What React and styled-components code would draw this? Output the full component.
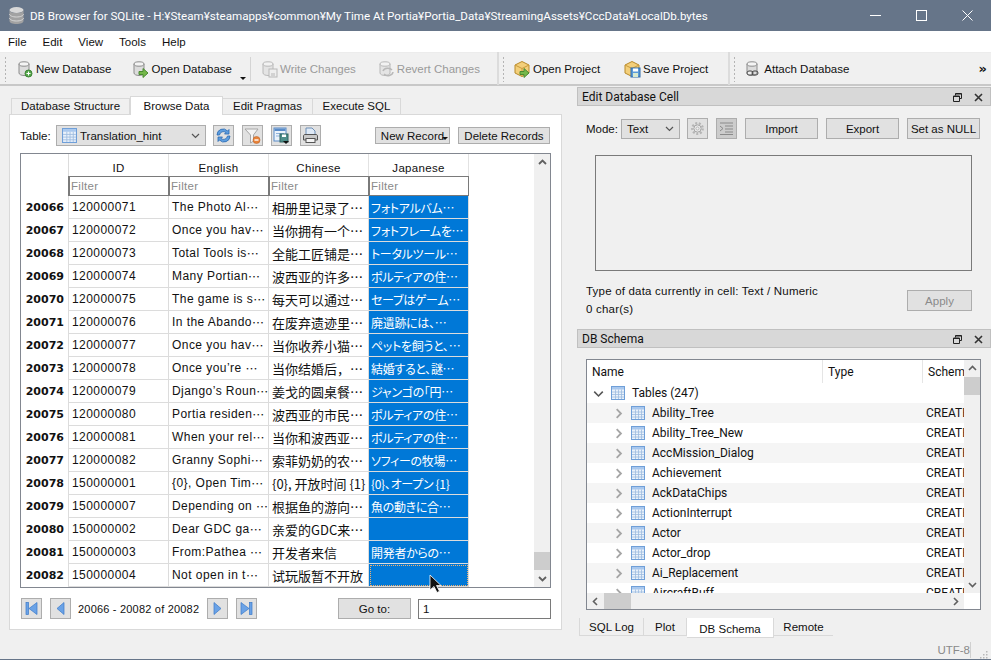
import React from 'react';
import styled, { createGlobalStyle } from 'styled-components';

const UI_FONT = '"Liberation Sans", Arial, "Noto Sans CJK JP", sans-serif';
const SEGOE_LIKE = 'Roboto, "Noto Sans", sans-serif';

const GlobalStyle = createGlobalStyle`
  html, body {
    margin: 0;
    padding: 0;
    background: #f0f0f0;
    overflow: hidden;
  }
  * { box-sizing: border-box; }
  #root { width: 991px; height: 660px; }
`;

const Window = styled.div`
  position: relative;
  width: 991px;
  height: 660px;
  display: flex;
  flex-direction: column;
  background: #f0f0f0;
  font-family: ${UI_FONT};
  font-size: 11.5px;
  color: #111;
  border-bottom: 1px solid #667589;
  overflow: hidden;
`;

// Title bar
const TitleBar = styled.div`
  height: 31px;
  flex: none;
  display: flex;
  align-items: center;
  background: #667589;
  color: #fff;
  padding: 0 1px 0 8px;
  font-family: ${SEGOE_LIKE};
  font-size: 11.6px;
`;

const TitleText = styled.span`
  margin-left: 5px;
  white-space: nowrap;
  flex: 1;
`;

const WinButton = styled.div`
  width: 46px;
  height: 31px;
  display: flex;
  align-items: center;
  justify-content: center;
`;

// Menu
const MenuBar = styled.div`
  height: 21px;
  flex: none;
  background: #fff;
  display: flex;
  align-items: center;
  padding-left: 8px;
  gap: 16px;
`;

// Toolbar
const ToolBar = styled.div`
  height: 34px;
  flex: none;
  display: flex;
  align-items: center;
  border-top: 1px solid #ececec;
  border-bottom: 2px solid #c8c8c8;
  background: #f0f0f0;
  position: relative;
`;

const Grip = styled.div`
  width: 3px;
  height: 26px;
  flex: none;
  margin-left: ${p => p.$left || 4}px;
  background-image: radial-gradient(#b4b4b4 1px, transparent 1px);
  background-size: 3px 4px;
`;

const ToolButton = styled.div`
  display: flex;
  align-items: center;
  gap: 2px;
  white-space: nowrap;
  margin-left: ${p => p.$left}px;
  color: ${p => (p.$off ? '#9a9a9a' : '#111')};
  position: relative;
`;

const ToolSep = styled.div`
  width: 1px;
  height: 24px;
  flex: none;
  background: #d4d4d4;
  margin-left: ${p => p.$left}px;
`;

const ToolDivider = styled.div`
  width: 2px;
  height: 33px;
  flex: none;
  background: #dcdcdc;
  margin-left: ${p => p.$left}px;
`;

const DropMark = styled.span`
  position: absolute;
  right: -14px;
  bottom: -2px;
  width: 0;
  height: 0;
  border-left: 3px solid transparent;
  border-right: 3px solid transparent;
  border-top: 3px solid #111;
`;

const More = styled.div`
  margin-left: auto;
  margin-right: 4px;
  font-size: 13px;
  font-weight: 700;
  font-family: "DejaVu Sans", sans-serif;
`;

// Body
const Body = styled.div`
  flex: 1;
  display: flex;
  min-height: 0;
`;

const LeftColumn = styled.div`
  width: 577px;
  flex: none;
  padding: 10px 15px 0 9px;
`;

const TabRow = styled.div`
  display: flex;
  align-items: flex-end;
  height: 19px;
  padding-left: 2px;
  position: relative;
  z-index: 1;
`;

const MainTab = styled.div`
  height: ${p => (p.$active ? 19 : 17)}px;
  display: flex;
  align-items: center;
  justify-content: center;
  width: ${p => p.$w}px;
  padding-bottom: 1px;
  background: ${p => (p.$active ? '#fff' : '#f0f0f0')};
  border: 1px solid #d9d9d9;
  border-left: ${p => (p.$active || p.$first ? '1px solid #d9d9d9' : 'none')};
  border-bottom: ${p => (p.$active ? 'none' : '1px solid #d9d9d9')};
`;

const TabPane = styled.div`
  height: 516px;
  margin-top: -1px;
  background: #fff;
  border: 1px solid #d9d9d9;
  padding: 0 10px;
`;

const TableBar = styled.div`
  height: 38px;
  display: flex;
  align-items: center;
  padding-top: 3px;
`;

const TableLabel = styled.span`
  width: 30px;
  flex: none;
`;

const Combo = styled.div`
  display: flex;
  align-items: center;
  width: ${p => p.$w}px;
  height: ${p => p.$h || 21}px;
  background: #e1e1e1;
  border: 1px solid #adadad;
  padding: 0 5px;
  margin-left: ${p => p.$left || 0}px;
  flex: none;
  gap: 3px;
`;

const ComboLabel = styled.span`
  flex: 1;
`;

const IconButton = styled.div`
  width: 21px;
  height: 21px;
  flex: none;
  display: flex;
  align-items: center;
  justify-content: center;
  background: ${p => (p.$pressed ? '#cccccc' : '#e1e1e1')};
  border: 1px solid #adadad;
  margin-left: ${p => p.$left}px;
`;

const PushButton = styled.div`
  display: flex;
  align-items: center;
  justify-content: center;
  flex: none;
  position: relative;
  width: ${p => p.$w}px;
  height: ${p => p.$h || 21}px;
  margin-left: ${p => p.$left || 0}px;
  background: #e1e1e1;
  border: 1px solid #adadad;
  white-space: nowrap;
  color: ${p => (p.$off ? '#8a8a8a' : '#111')};
`;

const MiniArrow = styled.span`
  position: absolute;
  right: 1px;
  bottom: 3px;
  border-left: 3px solid transparent;
  border-right: 3px solid transparent;
  border-top: 3px solid #111;
`;

// Table
const TableFrame = styled.div`
  height: 435px;
  border: 1px solid #828790;
  display: flex;
  position: relative;
`;

const Grid = styled.div`
  width: 513px;
  flex: none;
  display: grid;
  grid-template-columns: 48px 100px 100px 100px 100px;
  grid-template-rows: 22px 20px repeat(17, 23px);
  align-content: start;
`;

const Corner = styled.div`
  grid-row: span 2;
  border-right: 1px solid #dcdcdc;
`;

const HeaderCell = styled.div`
  display: flex;
  align-items: center;
  justify-content: center;
  border-right: 1px solid #e2e2e2;
  padding-top: 5px;
  letter-spacing: 0.3px;
`;

const FilterBox = styled.div`
  border: 1px solid #7a7a7a;
  border-left-width: 2px;
  margin-left: -1px;
  background: #fff;
  color: #8a8a8a;
  display: flex;
  align-items: center;
  padding-left: 1px;
  letter-spacing: 0.3px;
`;

const RowHead = styled.div`
  display: flex;
  align-items: center;
  justify-content: flex-end;
  padding-right: 4px;
  font-family: "DejaVu Sans", sans-serif;
  font-weight: 700;
  font-size: 11px;
  border-right: 1px solid #dcdcdc;
`;

const Cell = styled.div`
  display: flex;
  align-items: center;
  padding-left: 3px;
  white-space: pre;
  overflow: hidden;
  border-right: 1px solid #dcdcdc;
  border-bottom: 1px solid #dcdcdc;
  font-family: ${p => (p.$zh ? '"Noto Sans CJK SC", sans-serif' : UI_FONT)};
  font-size: ${p => (p.$zh ? 13 : 12)}px;
  letter-spacing: ${p => (p.$zh ? 0 : '0.45px')};
`;

const SelectedCell = styled.div`
  display: flex;
  align-items: center;
  padding-left: 2px;
  white-space: nowrap;
  overflow: hidden;
  background: #0078d7;
  color: #fff;
  font-family: "Noto Sans CJK JP", sans-serif;
  font-size: 12px;
  letter-spacing: -0.3px;
  font-feature-settings: "palt";
  border-right: 1px solid #dcdcdc;
  border-bottom: 1px solid #dcdcdc;
  outline: ${p => (p.$focus ? '1px dotted #f0b070' : 'none')};
  outline-offset: -2px;
`;

const Dots = styled.span`
  font-family: "Noto Sans CJK JP", sans-serif;
  letter-spacing: 0;
`;

const Spacer = styled.div`
  flex: 1;
`;

const VScroll = styled.div`
  width: 16px;
  flex: none;
  background: #f0f0f0;
  display: flex;
  flex-direction: column;
  align-items: center;
`;

const ScrollEnd = styled.div`
  height: ${p => p.$h || 17}px;
  width: ${p => (p.$w ? `${p.$w}px` : '100%')};
  flex: none;
  display: flex;
  align-items: center;
  justify-content: center;
`;

const ScrollTrack = styled.div`
  flex: 1;
  width: 100%;
  display: flex;
  flex-direction: column;
  justify-content: ${p => (p.$start ? 'flex-start' : 'flex-end')};
`;

const Thumb = styled.div`
  height: ${p => p.$h}px;
  background: #cdcdcd;
  flex: none;
`;

// Pagination
const Pager = styled.div`
  height: 41px;
  display: flex;
  align-items: center;
`;

const PagerText = styled.span`
  margin-left: 7px;
  width: 122px;
  flex: none;
  font-size: 11px;
  letter-spacing: 0.2px;
  white-space: nowrap;
`;

const GotoInput = styled.div`
  width: 133px;
  height: 20px;
  flex: none;
  margin-left: 7px;
  border: 1px solid #7a7a7a;
  background: #fff;
  display: flex;
  align-items: center;
  padding-left: 4px;
`;

// Right docks
const RightColumn = styled.div`
  flex: 1;
  display: flex;
  flex-direction: column;
  min-width: 0;
  padding-top: 1px;
`;

const DockTitle = styled.div`
  height: 19px;
  flex: none;
  display: flex;
  align-items: center;
  background: #d8d8d8;
  border: 1px solid #c0c0c0;
  padding: 1px 7px 0 4px;
  gap: 12px;
  font-family: ${SEGOE_LIKE};
  font-size: 12px;
`;

const DockName = styled.span`
  flex: 1;
`;

const ModeRow = styled.div`
  display: flex;
  align-items: center;
  height: 21px;
  margin-top: 12px;
  padding-left: 9px;
`;

const ModeLabel = styled.span`
  width: 28px;
  flex: none;
`;

const EditArea = styled.div`
  width: 377px;
  height: 116px;
  flex: none;
  margin: 16px 0 0 18px;
  background: #f0f0f0;
  border: 1px solid #7a7a7a;
`;

const InfoRow = styled.div`
  display: flex;
  padding: 19px 19px 0 9px;
  height: 58px;
  flex: none;
`;

const InfoText = styled.div`
  flex: 1;
  display: flex;
  flex-direction: column;
  gap: 4px;
  margin-top: -6px;
  line-height: 14px;
  letter-spacing: 0.2px;
`;

const SchemaBox = styled.div`
  width: 395px;
  height: 251px;
  flex: none;
  margin: 11px 0 0 9px;
  border: 1px solid #828790;
  background: #fff;
  display: flex;
  flex-direction: column;
`;

const SchemaMain = styled.div`
  flex: 1;
  display: flex;
  min-height: 0;
`;

const TreeArea = styled.div`
  flex: 1;
  min-width: 0;
  overflow: hidden;
`;

const TreeHead = styled.div`
  display: grid;
  grid-template-columns: 236px 100px 1fr;
  height: 23px;
`;

const TreeHeadCell = styled.div`
  display: flex;
  align-items: center;
  padding: 1px 0 0 5px;
  white-space: nowrap;
  overflow: hidden;
  border-right: ${p => (p.$last ? 'none' : '1px solid #e5e5e5')};
  font-family: ${SEGOE_LIKE};
  font-size: 12px;
`;

const TreeRow = styled.div`
  height: 20px;
  display: flex;
  align-items: center;
  background: ${p => (p.$alt ? '#f5f5f5' : '#fff')};
  padding-left: ${p => p.$indent}px;
  position: relative;
  font-family: ${SEGOE_LIKE};
  font-size: 12px;
`;

const TreeGap = styled.span`
  width: 7px;
  flex: none;
`;

const TreeName = styled.span`
  margin-left: 7px;
`;

const TreeSql = styled.span`
  position: absolute;
  left: 339px;
`;

const HScroll = styled.div`
  height: 16px;
  flex: none;
  display: flex;
  background: #f0f0f0;
  margin-right: 16px;
`;

const HThumb = styled.div`
  width: 27px;
  flex: none;
  background: #cdcdcd;
`;

const DockTabs = styled.div`
  display: flex;
  align-items: flex-start;
  margin: 8px 0 0 2px;
  height: 20px;
  flex: none;
`;

const DockTab = styled.div`
  width: ${p => p.$w}px;
  height: ${p => (p.$active ? 20 : 18)}px;
  display: flex;
  align-items: center;
  justify-content: center;
  background: ${p => (p.$active ? '#fff' : '#f0f0f0')};
  border: 1px solid #d9d9d9;
  border-top: none;
  border-left: ${p => (p.$first ? '1px solid #d9d9d9' : 'none')};
  border-right: ${p => (p.$plain ? 'none' : '1px solid #d9d9d9')};
  padding-top: ${p => (p.$active ? 2 : 0)}px;
`;

const StatusBar = styled.div`
  display: flex;
  align-items: center;
  justify-content: flex-end;
  height: 22px;
  color: #8a8a8a;
  padding-right: 3px;
  flex: none;
  margin-top: 1px;
`;

const StatusText = styled.span`
  border-right: 1px solid #d0d0d0;
  line-height: 16px;
`;

const SizeGrip = styled.svg`
  margin: 8px 0 0 8px;
`;

const Cursor = styled.svg`
  position: absolute;
  left: 429px;
  top: 574px;
`;

// Icons
const DbShape = () => (
  <>
    <path d="M3 4v9c0 1.5 2.5 2.5 5 2.5s5-1 5-2.5V4z" fill="#dcdcdc" stroke="#8c8c8c" />
    <ellipse cx="8" cy="4" rx="5" ry="2.2" fill="#f4f4f4" stroke="#8c8c8c" />
  </>
);

const NewDbIcon = () => (
  <svg width="18" height="18" viewBox="0 0 18 18">
    <DbShape />
    <circle cx="12.5" cy="13.5" r="3.5" fill="#55a84a" stroke="#3c8236" />
    <path d="M10.5 13.5h4M12.5 11.5v4" stroke="#fff" />
  </svg>
);

const OpenDbIcon = () => (
  <svg width="18" height="18" viewBox="0 0 18 18">
    <DbShape />
    <path d="M8 11.5h4V8.500l5 4.500-5 4.500v-3H8z" fill="#75b84a" stroke="#4b8a32" />
  </svg>
);

const WriteIcon = () => (
  <svg width="18" height="18" viewBox="0 0 18 18" opacity="0.55">
    <DbShape />
    <rect x="9" y="9" width="8" height="8" fill="#eee" stroke="#8c8c8c" />
    <rect x="11" y="13" width="4" height="4" fill="#bbb" />
  </svg>
);

const RevertIcon = () => (
  <svg width="18" height="18" viewBox="0 0 18 18" opacity="0.55">
    <DbShape />
    <path d="M6 11a5 4 0 0 1 9-1M16 12a5 4 0 0 1-9 2" fill="none" stroke="#8c8c8c" strokeWidth="1.5" />
  </svg>
);

const BoxShape = () => (
  <path d="M2 5l7-3.500L16 5v8l-7 3.500L2 13z" fill="#f3cf7a" stroke="#b88a2a" />
);

const OpenProjectIcon = () => (
  <svg width="18" height="18" viewBox="0 0 18 18">
    <BoxShape />
    <path d="M2 5l7 3.500L16 5M9 8.500v8" fill="none" stroke="#c99a3a" />
    <path d="M7 11.500h4V8.500l5 4.500-5 4.500v-3H7z" fill="#75b84a" stroke="#4b8a32" />
  </svg>
);

const SaveProjectIcon = () => (
  <svg width="18" height="18" viewBox="0 0 18 18">
    <BoxShape />
    <path d="M2 5l7 3.500L16 5" fill="none" stroke="#c99a3a" />
    <rect x="8" y="8" width="9" height="9" fill="#5a9ad8" stroke="#2f6ba8" />
    <rect x="10" y="8.500" width="5" height="3" fill="#fff" />
    <rect x="10" y="13" width="5" height="4" fill="#d8ead0" />
  </svg>
);

const AttachIcon = () => (
  <svg width="18" height="18" viewBox="0 0 18 18">
    <DbShape />
    <rect x="3" y="11" width="6" height="4" rx="2" fill="#eee" stroke="#444" />
    <rect x="8" y="11" width="6" height="4" rx="2" fill="none" stroke="#444" />
  </svg>
);

const TableIcon = ({ size = 14 }) => (
  <svg width={size} height={size} viewBox="0 0 14 14">
    <rect x="0.500" y="0.500" width="13" height="13" fill="#eaf2fb" stroke="#6f9fd8" />
    <rect x="1" y="1" width="12" height="2.500" fill="#a9c8ee" />
    <path d="M1 6h12M1 8.500h12M1 11h12M4.500 3.500V13M7.500 3.500V13M10.500 3.500V13" stroke="#9dbbe0" strokeWidth="0.8" />
  </svg>
);

const RefreshIcon = () => (
  <svg width="17" height="17" viewBox="0 0 17 17">
    <path d="M2 8a6 6 0 0 1 10.500-4L14 2.500V7H9.500l1.500-1.500A4 4 0 0 0 4.500 8z" fill="#5d9ee0" stroke="#2a68b0" strokeWidth="0.8" />
    <path d="M15 9a6 6 0 0 1-10.500 4L3 14.500V10h4.500L6 11.500A4 4 0 0 0 12.500 9z" fill="#5d9ee0" stroke="#2a68b0" strokeWidth="0.8" />
  </svg>
);

const FilterIcon = () => (
  <svg width="17" height="17" viewBox="0 0 17 17">
    <path d="M1 2h13L9.500 8v6l-3 2V8z" fill="#f4f4f4" stroke="#a6a6a6" />
    <circle cx="12.500" cy="13" r="3.500" fill="#e8833a" stroke="#c0652a" strokeWidth="0.6" />
    <path d="M10.500 13h4" stroke="#fff" strokeWidth="1.400" />
  </svg>
);

const ExportIcon = () => (
  <svg width="17" height="17" viewBox="0 0 17 17">
    <rect x="1" y="1" width="12" height="13" fill="#eaf2fb" stroke="#5a8cc8" />
    <rect x="1.500" y="1.500" width="11" height="2.500" fill="#5a8cc8" />
    <path d="M3 6.500h8M3 9h4" stroke="#8fb2dc" />
    <rect x="7" y="7" width="8" height="8" fill="#4f8e8a" stroke="#2f6460" />
    <rect x="9" y="7.500" width="4" height="2.500" fill="#fff" />
    <path d="M10 14h6l-3 3z" fill="#111" />
  </svg>
);

const PrintIcon = () => (
  <svg width="17" height="17" viewBox="0 0 17 17">
    <path d="M4 1h6l3 3v5H4z" fill="#dfeaf7" stroke="#6f8fb5" />
    <path d="M1.500 9c0-1 .7-1.500 1.500-1.500h11c.8 0 1.500.5 1.500 1.500v4h-14z" fill="#c9c9c9" stroke="#555" />
    <rect x="4" y="11.500" width="9" height="4" fill="#f4f4f4" stroke="#555" />
  </svg>
);

const Chevron = ({ dir = 'down', color = '#555', size = 9, weight = 1.2 }) => {
  const paths = {
    down: 'M1 3l3.500 3.500L8 3',
    up: 'M1 6l3.500-3.500L8 6',
    left: 'M6 1L2.500 4.500 6 8',
    right: 'M3 1l3.500 3.500L3 8',
  };
  return (
    <svg width={size} height={size} viewBox="0 0 9 9">
      <path d={paths[dir]} fill="none" stroke={color} strokeWidth={weight} />
    </svg>
  );
};

const PagerIcon = ({ kind }) => {
  const flip = kind === 'first' || kind === 'prev';
  const bar = kind === 'first' || kind === 'last';
  return (
    <svg width="15" height="15" viewBox="0 0 15 15">
      <g transform={flip ? 'matrix(-1 0 0 1 15 0)' : undefined}>
        <path d={bar ? 'M2 1.500l8 6-8 6z' : 'M4 1.500l7 6-7 6z'} fill="#6aa2e6" stroke="#3a78c8" strokeWidth="0.7" />
        {bar && <rect x="10.500" y="1.500" width="2.500" height="12" fill="#6aa2e6" stroke="#3a78c8" strokeWidth="0.7" />}
      </g>
    </svg>
  );
};

const GearIcon = () => (
  <svg width="17" height="17" viewBox="0 0 17 17">
    <circle cx="8.500" cy="8.500" r="5.200" fill="none" stroke="#b5b5b5" strokeWidth="2.400" strokeDasharray="2 1.600" />
    <circle cx="8.500" cy="8.500" r="3.600" fill="#f0f0f0" stroke="#a5a5a5" />
    <circle cx="8.500" cy="8.500" r="1.600" fill="none" stroke="#b5b5b5" />
  </svg>
);

const IndentIcon = () => (
  <svg width="15" height="15" viewBox="0 0 15 15">
    <path d="M1 2h13M6 5h8M6 8h8M6 11h8M1 13.500h13" stroke="#8a8a8a" />
    <path d="M1 5l3 2.500L1 10" fill="none" stroke="#8a8a8a" />
  </svg>
);

const FloatIcon = () => (
  <svg width="9" height="9" viewBox="0 0 9 9">
    <path d="M2.500 2.500V.5h6v5h-2M.5 3h6v5.500h-6z" fill="none" stroke="#222" />
    <path d="M2.500 1h6M.5 3.500h6" stroke="#222" />
  </svg>
);

const CloseIcon = () => (
  <svg width="9" height="9" viewBox="0 0 9 9">
    <path d="M1 1l7 7M8 1L1 8" stroke="#333" strokeWidth="1.600" />
  </svg>
);

const rows = [
  ['20066', '120000071', 'The Photo Al', '相册里记录了…', 'フォトアルバム…'],
  ['20067', '120000072', 'Once you hav', '当你拥有一个…', 'フォトフレームを…'],
  ['20068', '120000073', 'Total Tools is', '全能工匠铺是…', 'トータルツール…'],
  ['20069', '120000074', 'Many Portian', '波西亚的许多…', 'ポルティアの住…'],
  ['20070', '120000075', 'The game is s', '每天可以通过…', 'セーブはゲーム…'],
  ['20071', '120000076', 'In the Abando', '在废弃遗迹里…', '廃遺跡には、…'],
  ['20072', '120000077', 'Once you hav', '当你收养小猫…', 'ペットを飼うと、…'],
  ['20073', '120000078', 'Once you’re ', '当你结婚后，…', '結婚すると、謎…'],
  ['20074', '120000079', 'Django’s Roun', '姜戈的圆桌餐…', 'ジャンゴの「円…'],
  ['20075', '120000080', 'Portia residen', '波西亚的市民…', 'ポルティアの住…'],
  ['20076', '120000081', 'When your rel', '当你和波西亚…', 'ポルティアの住…'],
  ['20077', '120000082', 'Granny Sophi', '索菲奶奶的农…', 'ソフィーの牧場…'],
  ['20078', '150000001', '{0}, Open Tim', '{0}, 开放时间 {1}', '{0}、オープン {1}'],
  ['20079', '150000007', 'Depending on ', '根据鱼的游向…', '魚の動きに合…'],
  ['20080', '150000002', 'Dear GDC ga', '亲爱的GDC来…', ''],
  ['20081', '150000003', 'From:Pathea ', '开发者来信', '開発者からの…'],
  ['20082', '150000004', 'Not open in t', '试玩版暂不开放', ''],
];

const schemaTables = [
  'Ability_Tree', 'Ability_Tree_New', 'AccMission_Dialog', 'Achievement', 'AckDataChips',
  'ActionInterrupt', 'Actor', 'Actor_drop', 'Ai_Replacement', 'AircraftBuff',
];

const App = () => (
  <Window>
    <GlobalStyle />
    <TitleBar>
      <svg width="17" height="19" viewBox="0 0 17 19">
        <ellipse cx="8.500" cy="4" rx="7" ry="3" fill="#d8d8d8" />
        <path d="M1.500 4v11c0 1.700 3 3 7 3s7-1.300 7-3V4c0 1.700-3 3-7 3s-7-1.300-7-3z" fill="#a2a2a2" />
        <path d="M1.500 8c0 1.700 3 3 7 3s7-1.300 7-3M1.500 12c0 1.700 3 3 7 3s7-1.300 7-3" fill="none" stroke="#d8d8d8" />
      </svg>
      <TitleText>DB Browser for SQLite - H:¥Steam¥steamapps¥common¥My Time At Portia¥Portia_Data¥StreamingAssets¥CccData¥LocalDb.bytes</TitleText>
      <WinButton>
        <svg width="11" height="11" viewBox="0 0 11 11"><path d="M0 5.500h11" stroke="#fff" /></svg>
      </WinButton>
      <WinButton>
        <svg width="11" height="11" viewBox="0 0 11 11"><rect x="0.500" y="0.500" width="10" height="10" fill="none" stroke="#fff" /></svg>
      </WinButton>
      <WinButton>
        <svg width="11" height="11" viewBox="0 0 11 11"><path d="M0.500 0.500l10 10M10.500 0.500l-10 10" stroke="#fff" /></svg>
      </WinButton>
    </TitleBar>

    <MenuBar>
      <span>File</span>
      <span>Edit</span>
      <span>View</span>
      <span>Tools</span>
      <span>Help</span>
    </MenuBar>

    <ToolBar>
      <Grip />
      <ToolButton $left={9}><NewDbIcon />New Database</ToolButton>
      <ToolButton $left={20}><OpenDbIcon />Open Database<DropMark /></ToolButton>
      <ToolSep $left={18} />
      <ToolButton $left={9} $off><WriteIcon />Write Changes</ToolButton>
      <ToolButton $left={21} $off><RevertIcon />Revert Changes</ToolButton>
      <ToolDivider $left={17} />
      <Grip $left={3} />
      <ToolButton $left={8}><OpenProjectIcon />Open Project</ToolButton>
      <ToolButton $left={23}><SaveProjectIcon />Save Project</ToolButton>
      <ToolDivider $left={20} />
      <Grip $left={3} />
      <ToolButton $left={8}><AttachIcon />Attach Database</ToolButton>
      <More>»</More>
    </ToolBar>

    <Body>
      <LeftColumn>
        <TabRow>
          <MainTab $w={119} $first>Database Structure</MainTab>
          <MainTab $w={93} $active>Browse Data</MainTab>
          <MainTab $w={90}>Edit Pragmas</MainTab>
          <MainTab $w={88}>Execute SQL</MainTab>
        </TabRow>
        <TabPane>
          <TableBar>
            <TableLabel>Table:</TableLabel>
            <Combo $w={150} $left={6}>
              <TableIcon size={15} />
              <ComboLabel>Translation_hint</ComboLabel>
              <Chevron />
            </Combo>
            <IconButton $left={7}><RefreshIcon /></IconButton>
            <IconButton $left={8}><FilterIcon /></IconButton>
            <IconButton $left={8}><ExportIcon /></IconButton>
            <IconButton $left={8}><PrintIcon /></IconButton>
            <PushButton $w={75} $h={17} $left={54}>New Record<MiniArrow /></PushButton>
            <PushButton $w={92} $h={17} $left={8}>Delete Records</PushButton>
          </TableBar>
          <TableFrame>
            <Grid>
              <Corner />
              <HeaderCell>ID</HeaderCell>
              <HeaderCell>English</HeaderCell>
              <HeaderCell>Chinese</HeaderCell>
              <HeaderCell>Japanese</HeaderCell>
              <FilterBox>Filter</FilterBox>
              <FilterBox>Filter</FilterBox>
              <FilterBox>Filter</FilterBox>
              <FilterBox>Filter</FilterBox>
              {rows.map(r => (
                <React.Fragment key={r[0]}>
                  <RowHead>{r[0]}</RowHead>
                  <Cell>{r[1]}</Cell>
                  <Cell>{r[2]}<Dots>…</Dots></Cell>
                  <Cell $zh>{r[3]}</Cell>
                  <SelectedCell $focus={r[0] === '20082'}>{r[4]}</SelectedCell>
                </React.Fragment>
              ))}
            </Grid>
            <Spacer />
            <VScroll>
              <ScrollEnd><Chevron dir="up" color="#606060" weight={1.8} /></ScrollEnd>
              <ScrollTrack>
                <Thumb $h={18} />
              </ScrollTrack>
              <ScrollEnd><Chevron dir="down" color="#606060" weight={1.8} /></ScrollEnd>
            </VScroll>
          </TableFrame>
          <Pager>
            <IconButton $left={1}><PagerIcon kind="first" /></IconButton>
            <IconButton $left={8}><PagerIcon kind="prev" /></IconButton>
            <PagerText>20066 - 20082 of 20082</PagerText>
            <IconButton $left={7}><PagerIcon kind="next" /></IconButton>
            <IconButton $left={8}><PagerIcon kind="last" /></IconButton>
            <PushButton $w={73} $left={81}>Go to:</PushButton>
            <GotoInput>1</GotoInput>
          </Pager>
        </TabPane>
      </LeftColumn>

      <RightColumn>
        <DockTitle>
          <DockName>Edit Database Cell</DockName>
          <FloatIcon />
          <CloseIcon />
        </DockTitle>
        <ModeRow>
          <ModeLabel>Mode:</ModeLabel>
          <Combo $w={59} $h={20} $left={7}>
            <ComboLabel>Text</ComboLabel>
            <Chevron />
          </Combo>
          <IconButton $left={7}><GearIcon /></IconButton>
          <IconButton $left={8} $pressed><IndentIcon /></IconButton>
          <PushButton $w={73} $left={8}>Import</PushButton>
          <PushButton $w={73} $left={8}>Export</PushButton>
          <PushButton $w={73} $left={8}>Set as NULL</PushButton>
        </ModeRow>
        <EditArea />
        <InfoRow>
          <InfoText>
            <span>Type of data currently in cell: Text / Numeric</span>
            <span>0 char(s)</span>
          </InfoText>
          <PushButton $w={65} $off>Apply</PushButton>
        </InfoRow>
        <DockTitle>
          <DockName>DB Schema</DockName>
          <FloatIcon />
          <CloseIcon />
        </DockTitle>
        <SchemaBox>
          <SchemaMain>
            <TreeArea>
              <TreeHead>
                <TreeHeadCell>Name</TreeHeadCell>
                <TreeHeadCell>Type</TreeHeadCell>
                <TreeHeadCell $last>Schema</TreeHeadCell>
              </TreeHead>
              <TreeRow $indent={6}>
                <Chevron dir="down" color="#555" size={11} weight={1.3} />
                <TreeGap />
                <TableIcon />
                <TreeName>Tables (247)</TreeName>
              </TreeRow>
              {schemaTables.map((name, i) => (
                <TreeRow key={name} $indent={26} $alt={i % 2 === 0}>
                  <Chevron dir="right" color="#a6a6a6" size={11} weight={1.5} />
                  <TreeGap />
                  <TableIcon />
                  <TreeName>{name}</TreeName>
                  <TreeSql>CREATE</TreeSql>
                </TreeRow>
              ))}
            </TreeArea>
            <VScroll>
              <ScrollEnd><Chevron dir="up" color="#606060" weight={1.6} /></ScrollEnd>
              <ScrollTrack $start>
                <Thumb $h={18} />
              </ScrollTrack>
              <ScrollEnd><Chevron dir="down" color="#606060" weight={1.6} /></ScrollEnd>
            </VScroll>
          </SchemaMain>
          <HScroll>
            <ScrollEnd $w={17}><Chevron dir="left" color="#606060" weight={1.6} /></ScrollEnd>
            <HThumb />
            <Spacer />
            <ScrollEnd $w={17}><Chevron dir="right" color="#606060" weight={1.6} /></ScrollEnd>
          </HScroll>
        </SchemaBox>
        <DockTabs>
          <DockTab $w={65} $first>SQL Log</DockTab>
          <DockTab $w={43}>Plot</DockTab>
          <DockTab $w={87} $active>DB Schema</DockTab>
          <DockTab $w={59} $plain>Remote</DockTab>
        </DockTabs>
        <StatusBar>
          <StatusText>UTF-8</StatusText>
          <SizeGrip width="9" height="9" viewBox="0 0 9 9">
            <path d="M7 1h1.500v1.500H7zM4 4h1.500v1.500H4zM7 4h1.500v1.500H7zM1 7h1.500v1.500H1zM4 7h1.500v1.500H4zM7 7h1.500v1.500H7z" fill="#b8b8b8" />
          </SizeGrip>
        </StatusBar>
      </RightColumn>
    </Body>

    <Cursor width="14" height="20" viewBox="0 0 14 20">
      <path d="M1 1v15l4-3.500 3 6 2.500-1.200-3-5.800H12z" fill="#111" stroke="#fff" strokeWidth="0.8" />
    </Cursor>
  </Window>
);

export default App;
